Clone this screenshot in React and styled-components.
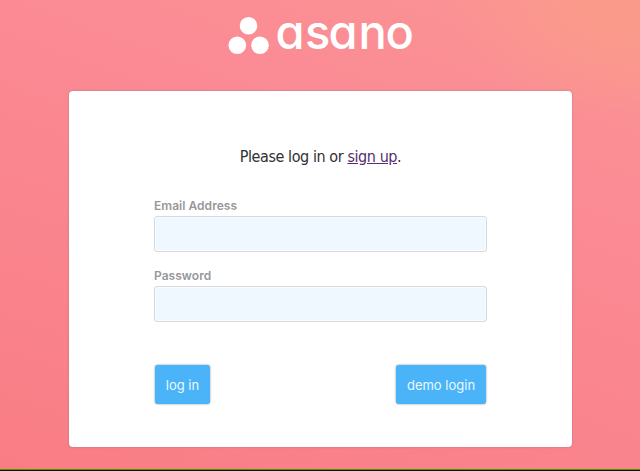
import React from "react";
import styled, { createGlobalStyle } from "styled-components";

const GlobalStyle = createGlobalStyle`
  * { box-sizing: border-box; }
  body { margin: 0; }
`;

const Page = styled.main`
  display: flex;
  flex-direction: column;
  align-items: center;
  height: 471px;
  overflow: hidden;
  border-bottom: 1px solid #061a00;
  box-shadow: inset 0 -1px #4f9400;
  background:
    radial-gradient(ellipse 190px 120px at 100% 0, #fa9a8b 30%, rgba(250, 154, 139, 0) 100%),
    linear-gradient(20deg, #f97d85 0%, #fa858e 40%, #fb8b95 70%, #fa9593 100%);
`;

const Header = styled.header`
  display: flex;
  height: 91px;
  flex: none;
`;

const Logo = styled.svg`
  display: block;
  width: 640px;
  height: 70px;
  fill: #fff;
`;

const Wordmark = styled.text`
  font-family: Inter, sans-serif;
  font-size: 47px;
  font-weight: 500;
  font-feature-settings: "cv11";
`;

const Card = styled.form`
  display: flex;
  flex-direction: column;
  width: 503px;
  height: 356px;
  flex: none;
  margin-left: 1px;
  padding: 55px 85px 42px;
  border-radius: 4px;
  background: #fff;
  box-shadow: 0 0 2px rgba(95, 110, 125, 0.6);
`;

const Prompt = styled.p`
  margin: 0 0 32px;
  text-align: center;
  white-space: nowrap;
  color: #303033;
  font: 16px/21px "DejaVu Sans Condensed", "DejaVu Sans", sans-serif;
  font-stretch: condensed;
  letter-spacing: -0.42px;
`;

const SignUpLink = styled.a`
  color: #55306f;
  text-decoration: underline;
`;

const Field = styled.label`
  display: flex;
  flex-direction: column;
  height: 70px;
  color: #97979c;
  font: 600 12px/14px Inter, sans-serif;
  letter-spacing: 0.04px;
`;

const Input = styled.input`
  width: 333px;
  height: 36px;
  margin: 3px 0 0;
  padding: 0 10px;
  border: 1px solid #d6d9dd;
  border-radius: 3px;
  background: #f0f8ff;
  box-shadow: inset 0 0 0 1px #f8fbff;
  outline: none;
`;

const Actions = styled.div`
  display: flex;
  justify-content: space-between;
  width: 332px;
  margin-top: 26px;
  padding-left: 1px;
`;

const Button = styled.button`
  width: ${({ $width }) => $width}px;
  height: 39px;
  padding: 1px 0 0;
  border: 0;
  border-radius: 3px;
  background: #4bb4f9;
  box-shadow: 0 0 2px rgba(70, 90, 105, 0.75);
  color: #e9faff;
  font: 400 13px/38px Inter, sans-serif;
`;

export default function App() {
  return (
    <>
      <GlobalStyle />
      <Page>
        <Header>
          <Logo viewBox="0 0 640 70" role="img" aria-label="asano">
            <circle cx="248.5" cy="25.7" r="8.8" />
            <circle cx="237.3" cy="45.3" r="8.8" />
            <circle cx="260" cy="45.3" r="8.8" />
            <Wordmark x="275.5 305 328.5 358.5 385.5" y="49">asano</Wordmark>
          </Logo>
        </Header>
        <Card>
          <Prompt>
            Please log in or <SignUpLink href="#signup">sign up</SignUpLink>.
          </Prompt>
          <Field>
            Email Address
            <Input type="email" />
          </Field>
          <Field>
            Password
            <Input type="password" />
          </Field>
          <Actions>
            <Button type="submit" $width={55}>log in</Button>
            <Button type="button" $width={90}>demo login</Button>
          </Actions>
        </Card>
      </Page>
    </>
  );
}
